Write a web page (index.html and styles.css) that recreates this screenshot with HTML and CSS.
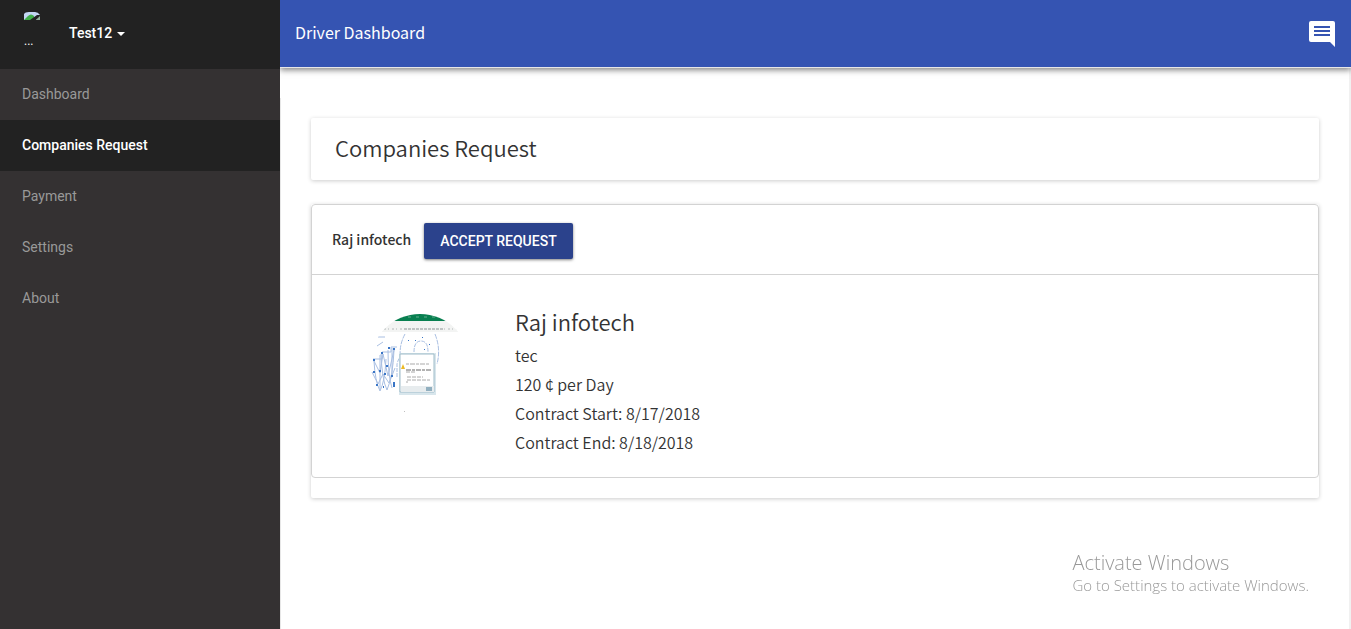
FILE: index.html
```html
<!DOCTYPE html>
<html lang="en">
<head>
  <meta charset="UTF-8">
  <meta name="viewport" content="width=device-width, initial-scale=1.0">
  <title>Driver Dashboard</title>
  <link rel="stylesheet" href="styles.css">
</head>
<body>
<aside class="sidebar">
  <div class="user-panel">
    <div class="user-avatar">
      <svg width="16" height="16" viewBox="0 0 16 16" aria-hidden="true">
        <path d="M0 8V2q1-2 5-2h6q3 0 5 3v5z" fill="#c3d5f3"/>
        <path d="M0 8l4-4q3-3 6 0v4z" fill="#3fae49"/>
        <path d="M6 8l7-5h3v2l-4 3z" fill="#222"/>
        <path d="M12 8l4-4v4z" fill="#8fae98"/>
      </svg>
      <span>...</span>
    </div>
    <button class="user-name" type="button">Test12 <span class="caret"></span></button>
  </div>
  <nav class="menu">
    <a href="#">Dashboard</a>
    <a href="#" class="active">Companies Request</a>
    <a href="#">Payment</a>
    <a href="#">Settings</a>
    <a href="#">About</a>
  </nav>
</aside>

<div class="main">
  <header class="topbar">
    <span class="topbar-title">Driver Dashboard</span>
    <button class="chat-btn" type="button" aria-label="Messages">
      <svg width="32" height="32" viewBox="0 0 32 32" aria-hidden="true">
        <path fill="#fff" d="M5 3h22q2 0 2 2v24l-5-5H5q-2 0-2-2V5q0-2 2-2zM8 8v2h16V8zM8 12v2h16v-2zM8 16v2h16v-2z"/>
      </svg>
    </button>
  </header>

  <main class="content">
    <div class="card title-card">
      <h1>Companies Request</h1>
    </div>

    <div class="card list-card">
      <section class="panel">
        <div class="panel-heading">
          <strong>Raj infotech</strong>
          <button class="accept-btn" type="button">ACCEPT REQUEST</button>
        </div>
        <div class="panel-body">
          <svg class="company-photo" width="100" height="100" viewBox="0 0 100 100" role="img" aria-label="Raj infotech">
            <defs>
              <clipPath id="round"><circle cx="50" cy="50" r="50"/></clipPath>
            </defs>
            <g clip-path="url(#round)">
              <rect width="100" height="100" fill="#fff"/>
              <rect width="100" height="7" fill="#087f50"/>
              <path d="M38 3h32" stroke="#65ae8d" stroke-dasharray="3 5"/>
              <rect y="7" width="100" height="11" fill="#f3f4f3"/>
              <path d="M10 15h85" stroke="#d3d6d6" stroke-width="2" stroke-dasharray="1 3 2 2"/>
              <path d="M34 15h40" stroke="#c0c4c4" stroke-width="2" stroke-dasharray="3 1"/>
              <g fill="none" stroke="#a9bfe2" stroke-width="1">
                <path d="M35 20q-7 13-4 27M65 20q6 15 2 30" stroke-dasharray="5 1"/>
                <path d="M44 38q0-11 7-11t7 11M27 63v-13q3-12 12-9" stroke-dasharray="4 1"/>
                <path d="M3 45h9v-7h9v-5h6M8 23h7M7 32l6-4"/>
                <path d="M4 47q1 20 6 30 5-10 6-32M11 40q1 26 6 36 6-14 7-40M18 36q0 26 4 38M4 47l6 12 3-19 5 22 6-26M2 58l6 12 5-10 6 9 6-15M10 41v34M22 34v28"/>
              </g>
              <g fill="#3975c6">
                <path d="M3 45h2v2H3zM11 38h2v2h-2zM18 33h2v2h-2zM23 34h2v2h-2zM3 57h2v2H3zM9 56h2v2H9zM16 51h2v2h-2zM23 68h2v5h-2zM14 59h2v2h-2zM21 61h2v2h-2zM6 70h2v2H6zM13 72h1v2h-1z"/>
                <path d="M38 26h1v1h-1zM45 26h1v1h-1zM52 23h1v1h-1zM54 35h1v1h-1zM59 30h1v1h-1z"/>
              </g>
              <path d="M29 39h37v42H29z" fill="#d8e6ec"/>
              <path d="M30 40h34v38H30z" fill="#fff" stroke="#9fbcc9"/>
              <path d="M31 72h33v6H31z" fill="#e7ecee"/>
              <path d="M33 50l2 5h-4z" fill="#edba24"/>
              <g stroke="#aaa" stroke-width="1">
                <path d="M36 50h24" stroke-dasharray="3 1 5 1"/>
                <path d="M36 56h26" stroke="#666" stroke-dasharray="5 1 3 1"/>
                <path d="M36 58h9M37 63h16M37 66h23M36 68h2" stroke-dasharray="4 1"/>
              </g>
              <path d="M56 73h6v4h-6z" fill="#91afbf"/>
              <path d="M34 97h1v1h-1z" fill="#999"/>
            </g>
          </svg>
          <div class="company-info">
            <h2>Raj infotech</h2>
            <p>tec</p>
            <p>120 ¢ per Day</p>
            <p>Contract Start: 8/17/2018</p>
            <p>Contract End: 8/18/2018</p>
          </div>
        </div>
      </section>
    </div>
  </main>
</div>

<div class="watermark">
  <div class="watermark-title">Activate Windows</div>
  <div class="watermark-text">Go to Settings to activate Windows.</div>
</div>
</body>
</html>
```
FILE: styles.css
```css
* {
  box-sizing: border-box;
}

body {
  margin: 0;
  display: flex;
  min-height: 100vh;
  font-family: "Noto Sans CJK SC", "Noto Sans", sans-serif;
  font-size: 16px;
  color: #333;
  background-color: #fff;
}

h1, h2, p {
  margin: 0;
  font-weight: 400;
}

h1, h2 {
  font-size: 22px;
  font-weight: 350;
  line-height: 30px;
}

button {
  border: none;
  padding: 0;
  background: none;
  cursor: pointer;
}

/* sidebar */
.sidebar {
  flex: 0 0 280px;
  background-color: #343132;
  font-family: Roboto, sans-serif;
  font-size: 14px;
}

.user-panel {
  display: flex;
  height: 69px;
  padding: 0 24px;
  gap: 29px;
  background-color: #222;
}

.user-avatar {
  display: flex;
  flex-direction: column;
  width: 16px;
  padding-top: 12px;
  gap: 4px;
  color: #fff;
  font-size: 12px;
  line-height: 18px;
}

.user-name {
  align-self: flex-start;
  padding-top: 23px;
  color: #fff;
  font-family: Roboto, sans-serif;
  font-size: 14px;
  font-weight: 500;
  line-height: 20px;
}

.caret {
  display: inline-block;
  margin-left: 1px;
  vertical-align: middle;
  border-top: 4px solid #fff;
  border-left: 4px solid transparent;
  border-right: 4px solid transparent;
}

.menu a {
  display: block;
  padding: 15px 22px 16px;
  line-height: 20px;
  color: #999;
  text-decoration: none;
}

.menu .active {
  background-color: #222;
  color: #fff;
  font-weight: 500;
}

/* main */
.main {
  flex: 1;
  min-width: 0;
  border-right: 2px solid #f1f1f1;
}

.topbar {
  display: flex;
  align-items: flex-start;
  justify-content: space-between;
  height: 68px;
  margin-right: -2px;
  padding: 18px 13px 0 15px;
  border-bottom: 1px solid #e7e7e7;
  background-color: #3554b2;
  box-shadow: 0 2px 6px rgba(0, 0, 0, 0.5);
  clip-path: inset(0 0 -12px 0);
  color: #fff;
}

.topbar-title {
  font-size: 16px;
  line-height: 28px;
}

.chat-btn svg {
  display: block;
}

.content {
  margin-top: 30px;
  padding: 20px 30px;
  min-height: calc(100vh - 98px);
  border-left: 1px solid #e7e7e7;
}

.card {
  background-color: #fff;
  border-radius: 2px;
  box-shadow: 0 1px 4px rgba(0, 0, 0, 0.2);
}

.title-card {
  margin-bottom: 24px;
  padding: 14px 24px 18px;
}

.list-card {
  padding-bottom: 20px;
}

.panel {
  border: 1px solid #d3d3d3;
  border-radius: 4px;
}

.panel-heading {
  display: flex;
  align-items: flex-start;
  gap: 13px;
  padding: 18px 20px 15px;
  border-bottom: 1px solid #d3d3d3;
}

.panel-heading strong {
  font-size: 14px;
  font-weight: 500;
  line-height: 32px;
}

.accept-btn {
  height: 36px;
  padding: 0 16px;
  border-radius: 2px;
  background-color: #2b428c;
  box-shadow: 0 1px 3px rgba(0, 0, 0, 0.5);
  color: #fff;
  font-family: Roboto, sans-serif;
  font-size: 14px;
  font-weight: 500;
}

.panel-body {
  display: flex;
  gap: 45px;
  padding: 31px 58px 23px;
}

.company-photo {
  flex: none;
  margin-top: 8px;
}

.company-info p {
  padding: 5px 0 0;
  font-size: 16px;
  font-weight: 350;
  line-height: 24px;
}

.company-info h2 {
  margin-bottom: 2px;
}

/* overlay text in the corner of the window */
.watermark {
  position: fixed;
  right: 42px;
  bottom: 34px;
  color: #999;
  font-family: "Open Sans", sans-serif;
  font-weight: 300;
}

.watermark-title {
  font-size: 20px;
  line-height: 25px;
}

.watermark-text {
  font-size: 15px;
  line-height: 20px;
}
```
